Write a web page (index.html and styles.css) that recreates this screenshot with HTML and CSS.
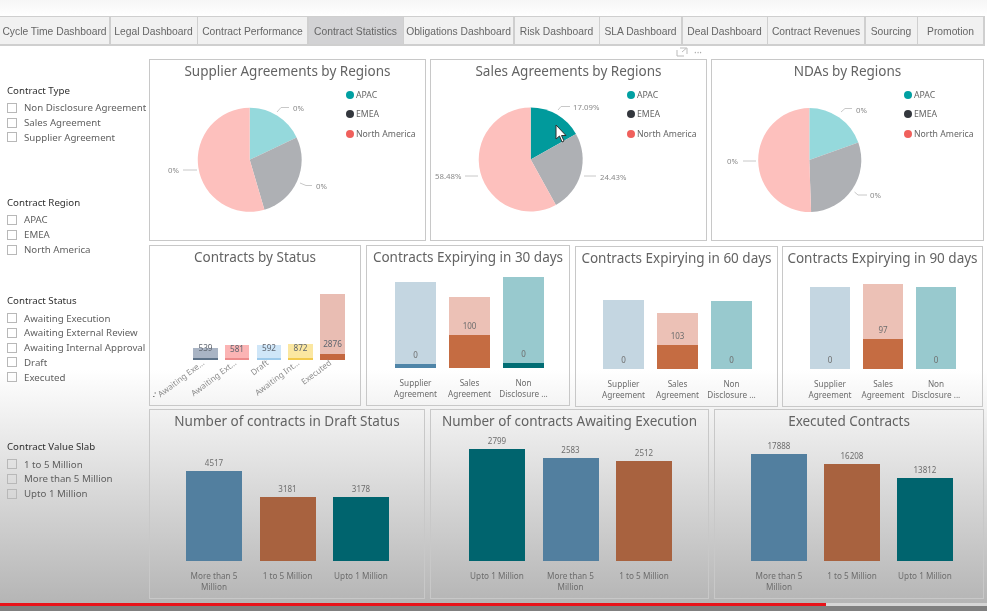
FILE: index.html
```html
<!DOCTYPE html>
<html lang="en">
<head>
  <meta charset="UTF-8">
  <title>Contract Statistics</title>
  <link rel="stylesheet" href="styles.css">
</head>
<body>
  <div class="tabs">
    <div class="tab">Cycle Time Dashboard</div>
    <div class="tab">Legal Dashboard</div>
    <div class="tab">Contract Performance</div>
    <div class="tab active">Contract Statistics</div>
    <div class="tab">Obligations Dashboard</div>
    <div class="tab">Risk Dashboard</div>
    <div class="tab">SLA Dashboard</div>
    <div class="tab">Deal Dashboard</div>
    <div class="tab">Contract Revenues</div>
    <div class="tab">Sourcing</div>
    <div class="tab">Promotion</div>
  </div>

  <div class="main">
    <div class="sidebar">
      <div class="slicer type">
        <h4>Contract Type</h4>
        <div class="opt">Non Disclosure Agreement</div>
        <div class="opt">Sales Agreement</div>
        <div class="opt">Supplier Agreement</div>
      </div>
      <div class="slicer region">
        <h4>Contract Region</h4>
        <div class="opt">APAC</div>
        <div class="opt">EMEA</div>
        <div class="opt">North America</div>
      </div>
      <div class="slicer status">
        <h4>Contract Status</h4>
        <div class="opt">Awaiting Execution</div>
        <div class="opt">Awaiting External Review</div>
        <div class="opt">Awaiting Internal Approval</div>
        <div class="opt">Draft</div>
        <div class="opt">Executed</div>
      </div>
      <div class="slicer slab">
        <h4>Contract Value Slab</h4>
        <div class="opt">1 to 5 Million</div>
        <div class="opt">More than 5 Million</div>
        <div class="opt">Upto 1 Million</div>
      </div>
    </div>

    <div class="charts">
      <div class="row row-pies">
        <div class="card">
          <div class="title">Supplier Agreements by Regions</div>
          <div class="pie-body">
            <svg class="pie" width="196" height="155">
              <path fill="#95d9dc" d="M99.7 76.8L99.7 24.8A52 52 0 0 1 146.6 54.4Z"/>
              <path fill="#aeb0b4" d="M99.7 76.8L146.6 54.4A52 52 0 0 1 114.4 126.7Z"/>
              <path fill="#fdc0bd" d="M99.7 76.8L114.4 126.7A52 52 0 1 1 99.7 24.8Z"/>
              <path class="leader" d="M127 29L131 24.5H139M150 100L156 102.5H162M33 87H47"/>
              <text x="143" y="28">0%</text>
              <text x="166" y="106">0%</text>
              <text x="18" y="90">0%</text>
            </svg>
            <div class="legend">
              <div class="key apac">APAC</div>
              <div class="key emea">EMEA</div>
              <div class="key na">North America</div>
            </div>
          </div>
        </div>
        <div class="card">
          <div class="tools">
            <svg width="12" height="10" viewBox="0 0 12 10"><path d="M1 3V9H8M4 1H11V7M6 5L10 1.5"/></svg>
            <span>&middot;&middot;&middot;</span>
          </div>
          <div class="title">Sales Agreements by Regions</div>
          <div class="pie-body">
            <svg class="pie" width="196" height="155">
              <path fill="#019a9c" d="M99.7 76.5L99.7 24.5A52 52 0 0 1 145 51Z"/>
              <path fill="#aeb0b4" d="M99.7 76.5L145 51A52 52 0 0 1 124.9 122Z"/>
              <path fill="#fdc0bd" d="M99.7 76.5L124.9 122A52 52 0 1 1 99.7 24.5Z"/>
              <path class="leader" d="M127 27L130 23.5H139M153 93H165M34 93H47"/>
              <text x="142" y="27">17.09%</text>
              <text x="169" y="97">24.43%</text>
              <text x="4" y="96">58.48%</text>
              <path class="cursor" d="M125 42V56L128.5 53L131 59L133 58L130.5 52.5H135Z"/>
            </svg>
            <div class="legend">
              <div class="key apac">APAC</div>
              <div class="key emea">EMEA</div>
              <div class="key na">North America</div>
            </div>
          </div>
        </div>
        <div class="card">
          <div class="title">NDAs by Regions</div>
          <div class="pie-body">
            <svg class="pie" width="192" height="155">
              <path fill="#95d9dc" d="M97.3 77L97.3 25A52 52 0 0 1 146.3 59.6Z"/>
              <path fill="#aeb0b4" d="M97.3 77L146.3 59.6A52 52 0 0 1 99.1 129Z"/>
              <path fill="#fdc0bd" d="M97.3 77L99.1 129A52 52 0 0 1 97.3 25Z"/>
              <path class="leader" d="M129 29L133 25.5H140M142.5 109L146 112H155M31 78H44"/>
              <text x="144" y="29.5">0%</text>
              <text x="158" y="115">0%</text>
              <text x="15" y="81">0%</text>
            </svg>
            <div class="legend">
              <div class="key apac">APAC</div>
              <div class="key emea">EMEA</div>
              <div class="key na">North America</div>
            </div>
          </div>
        </div>
      </div>

      <div class="row row-expiry">
        <div class="card">
          <div class="title">Contracts by Status</div>
          <svg class="status-chart" width="210" height="136">
            <rect x="43" y="79" width="25" height="12" fill="#a9b4c4"/><rect x="43" y="89" width="25" height="2" fill="#5d7288"/>
            <rect x="75" y="76" width="24" height="15" fill="#fbb4b4"/><rect x="75" y="89" width="24" height="2" fill="#ec8b8b"/>
            <rect x="107" y="76" width="24" height="15" fill="#cfe6f8"/><rect x="107" y="89" width="24" height="2" fill="#9cc9ea"/>
            <rect x="138" y="75" width="25" height="16" fill="#fbe7a1"/><rect x="138" y="89" width="25" height="2" fill="#f2c94c"/>
            <rect x="170" y="25" width="25" height="66" fill="#e9bdb3"/><rect x="170" y="85" width="25" height="6" fill="#c4673f"/>
            <text class="val" x="55.5" y="82">539</text>
            <text class="val" x="87" y="83">581</text>
            <text class="val" x="119" y="82">592</text>
            <text class="val" x="150.5" y="82">872</text>
            <text class="val" x="182.5" y="78">2876</text>
            <text class="slant" transform="translate(55 95) rotate(-37)">Awaiting Exe...</text>
            <text class="slant" transform="translate(87 95) rotate(-37)">Awaiting Ext...</text>
            <text class="slant" transform="translate(119 95) rotate(-37)">Draft</text>
            <text class="slant" transform="translate(150 95) rotate(-37)">Awaiting Int...</text>
            <text class="slant" transform="translate(182 95) rotate(-37)">Executed</text>
            <path class="dots" d="M3 127.5h1.5M4.5 124h1.5"/>
          </svg>
        </div>
        <div class="card">
          <div class="title">Contracts Expirying in 30 days</div>
          <div class="plot plot-30">
            <div class="col">
              <div class="bar pale-blue" style="height:86px"><span class="val">0</span><div class="fill blue" style="height:4px"></div></div>
              <div class="label">Supplier<br>Agreement</div>
            </div>
            <div class="col">
              <div class="bar pale-orange" style="height:71px"><span class="val">100</span><div class="fill orange" style="height:33px"></div></div>
              <div class="label">Sales<br>Agreement</div>
            </div>
            <div class="col">
              <div class="bar pale-teal" style="height:91px"><span class="val">0</span><div class="fill teal" style="height:5px"></div></div>
              <div class="label">Non<br>Disclosure ...</div>
            </div>
          </div>
        </div>
        <div class="card low">
          <div class="title">Contracts Expirying in 60 days</div>
          <div class="plot plot-60">
            <div class="col">
              <div class="bar pale-blue" style="height:69px"><span class="val">0</span></div>
              <div class="label">Supplier<br>Agreement</div>
            </div>
            <div class="col">
              <div class="bar pale-orange" style="height:56px"><span class="val">103</span><div class="fill orange" style="height:24px"></div></div>
              <div class="label">Sales<br>Agreement</div>
            </div>
            <div class="col">
              <div class="bar pale-teal" style="height:68px"><span class="val">0</span></div>
              <div class="label">Non<br>Disclosure ...</div>
            </div>
          </div>
        </div>
        <div class="card low">
          <div class="title">Contracts Expirying in 90 days</div>
          <div class="plot plot-90">
            <div class="col">
              <div class="bar pale-blue" style="height:82px"><span class="val">0</span></div>
              <div class="label">Supplier<br>Agreement</div>
            </div>
            <div class="col">
              <div class="bar pale-orange" style="height:85px"><span class="val">97</span><div class="fill orange" style="height:30px"></div></div>
              <div class="label">Sales<br>Agreement</div>
            </div>
            <div class="col">
              <div class="bar pale-teal" style="height:82px"><span class="val">0</span></div>
              <div class="label">Non<br>Disclosure ...</div>
            </div>
          </div>
        </div>
      </div>

      <div class="row row-totals">
        <div class="card">
          <div class="title">Number of contracts in Draft Status</div>
          <div class="plot plot-draft">
            <div class="col"><span class="val">4517</span><div class="bar solid-blue" style="height:90px"></div><div class="label">More than 5<br>Million</div></div>
            <div class="col"><span class="val">3181</span><div class="bar solid-orange" style="height:64px"></div><div class="label">1 to 5 Million</div></div>
            <div class="col"><span class="val">3178</span><div class="bar solid-teal" style="height:64px"></div><div class="label">Upto 1 Million</div></div>
          </div>
        </div>
        <div class="card">
          <div class="title">Number of contracts Awaiting Execution</div>
          <div class="plot plot-await">
            <div class="col"><span class="val">2799</span><div class="bar solid-teal" style="height:112px"></div><div class="label">Upto 1 Million</div></div>
            <div class="col"><span class="val">2583</span><div class="bar solid-blue" style="height:103px"></div><div class="label">More than 5<br>Million</div></div>
            <div class="col"><span class="val">2512</span><div class="bar solid-orange" style="height:100px"></div><div class="label">1 to 5 Million</div></div>
          </div>
        </div>
        <div class="card">
          <div class="title">Executed Contracts</div>
          <div class="plot plot-exec">
            <div class="col"><span class="val">17888</span><div class="bar solid-blue" style="height:107px"></div><div class="label">More than 5<br>Million</div></div>
            <div class="col"><span class="val">16208</span><div class="bar solid-orange" style="height:97px"></div><div class="label">1 to 5 Million</div></div>
            <div class="col"><span class="val">13812</span><div class="bar solid-teal" style="height:83px"></div><div class="label">Upto 1 Million</div></div>
          </div>
        </div>
      </div>
    </div>
  </div>

  <div class="progress"><div class="played" style="width:826px"></div></div>
  <div class="player-edge"></div>
</body>
</html>
```

FILE: styles.css
```css
* {
  margin: 0;
  padding: 0;
  box-sizing: border-box;
}

body {
  width: 987px;
  height: 611px;
  overflow: hidden;
  display: flex;
  flex-direction: column;
  font-family: "Noto Sans", "Open Sans", sans-serif;
  color: #666;
  background: linear-gradient(#f6f6f6 0, #fff 16px, #fff 370px, #b4b4b4 606px);
}

/* the source is a video frame, so everything is a little soft */
.tabs,
.main {
  filter: blur(0.4px);
}

/* tab strip */
.tabs {
  display: grid;
  grid-template-columns: 109px 86px 109px 94px 109px 84px 81px 84px 96px 51px 65px;
  column-gap: 1.5px;
  width: 985px;
  height: 30px;
  margin-top: 16px;
  background: #cfcfcf;
  padding: 1px 0 2px;
}

.tab {
  display: flex;
  align-items: center;
  justify-content: center;
  padding-top: 2px;
  background: #f1f1f1;
  font-family: "Liberation Sans", sans-serif;
  font-size: 10.3px;
  color: #666;
  white-space: nowrap;
}

.tab.active {
  background: #d2d2d4;
}

.main {
  flex: 1;
  display: flex;
  padding-top: 13px;
}

/* left hand slicers */
.sidebar {
  width: 149px;
  flex: none;
  padding-left: 7px;
}

.slicer h4 {
  font-size: 9.7px;
  font-weight: 400;
  color: #2f2f2f;
  line-height: 14px;
  margin-bottom: 2.5px;
}

.slicer.type { margin-top: 25px; }
.slicer.region { margin-top: 51.2px; }
.slicer.status { margin-top: 37.2px; }
.slicer.slab { margin-top: 55.5px; }

.opt {
  display: flex;
  align-items: center;
  gap: 7px;
  height: 14.8px;
  font-size: 9.7px;
  color: #5f5f5f;
  white-space: nowrap;
}

.opt::before {
  content: "";
  width: 10px;
  height: 10px;
  flex: none;
  box-sizing: border-box;
  border: 1.5px solid #b8b8b8;
}

/* chart grid */
.charts {
  width: 836px;
  display: flex;
  flex-direction: column;
  gap: 4px;
}

.row {
  display: grid;
  column-gap: 4px;
}

.row-pies {
  height: 182px;
  grid-template-columns: 277px 277px 273px;
}

.row-expiry {
  height: 160px;
  grid-template-columns: 213px 204px 204px 201px;
}

.row-expiry .card:nth-child(1) { margin-right: 1px; }
.row-expiry .card:nth-child(3) { margin-left: 1px; }

.row-totals {
  height: 190px;
  grid-template-columns: 276px 279px 270px;
  column-gap: 5px;
}

.card {
  position: relative;
  display: flex;
  flex-direction: column;
  border: 1px solid #c8c8c8;
  min-width: 0;
}

.card.low {
  margin-top: 1px;
  margin-bottom: -1px;
}

.title {
  height: 23px;
  line-height: 22px;
  flex: none;
  text-align: center;
  font-size: 13.5px;
  color: #636363;
  white-space: nowrap;
}

.tools {
  position: absolute;
  top: -13px;
  right: 4px;
  display: flex;
  align-items: center;
  gap: 6px;
  font-size: 10px;
  line-height: 10px;
  color: #aaa;
}

.tools path {
  fill: none;
  stroke: #bbb;
}

/* pies */
.pie-body {
  display: flex;
}

.pie {
  flex: none;
}

.pie text {
  font-size: 7.8px;
  fill: #8a8a8a;
}

.leader {
  fill: none;
  stroke: #c8c8c8;
}

.cursor {
  fill: #fff;
  stroke: #333;
  stroke-width: 1;
}

.legend {
  display: flex;
  flex-direction: column;
  padding-top: 2px;
}

.key {
  display: flex;
  align-items: center;
  gap: 2px;
  height: 19.5px;
  font-size: 8.7px;
  color: #666;
  white-space: nowrap;
}

.key::before {
  content: "";
  width: 8px;
  height: 8px;
  border-radius: 50%;
}

.key.apac::before { background: #01a0a2; }
.key.emea::before { background: #33373d; }
.key.na::before { background: #f0605c; }

/* bars */
.status-chart text {
  font-size: 8.2px;
  fill: #7f7f7f;
}

.status-chart .val {
  text-anchor: middle;
  fill: #5f6670;
}

.status-chart .slant {
  text-anchor: end;
  fill: #8c8c8c;
}

.dots {
  stroke: #777;
  stroke-width: 1.2;
}

.plot {
  flex: 1;
  display: flex;
}

.plot-30 { padding-left: 28px; gap: 13px; }
.plot-60 { padding-left: 27px; gap: 13px; }
.plot-90 { padding-left: 27px; gap: 13px; }
.plot-draft { padding-left: 36px; gap: 17.5px; }
.plot-await { padding-left: 38px; gap: 17.5px; }
.plot-exec { padding-left: 36px; gap: 17px; }

.col {
  display: flex;
  flex-direction: column;
  align-items: center;
  justify-content: flex-end;
  width: 41px;
}

.plot-90 .col {
  width: 40px;
}

.plot-draft .col,
.plot-await .col,
.plot-exec .col {
  width: 56px;
}

.bar {
  width: 100%;
  flex: none;
  display: flex;
  flex-direction: column;
  align-items: center;
  justify-content: flex-end;
}

.fill {
  width: 100%;
  flex: none;
}

.val {
  font-size: 8px;
  line-height: 11px;
  color: #6e6e6e;
}

.bar .val {
  margin-bottom: 4px;
}

.col > .val {
  margin-bottom: 3px;
}

.label {
  height: 37px;
  padding-top: 9px;
  font-size: 8.2px;
  line-height: 11px;
  text-align: center;
  color: #6c6c6c;
  white-space: nowrap;
}

.pale-blue { background: #c4d6e1; }
.pale-orange { background: #ecc1b6; }
.pale-teal { background: #98c9ce; }
.blue { background: #4f85a8; }
.orange { background: #c56c42; }
.teal { background: #016d74; }
.solid-blue { background: #527f9f; }
.solid-orange { background: #a8623f; }
.solid-teal { background: #00646e; }

/* video progress bar along the bottom */
.progress {
  height: 3px;
  flex: none;
  background: #d6d6d6;
}

.played {
  height: 100%;
  background: #e8131a;
}

.player-edge {
  height: 5px;
  flex: none;
  background: #808080;
}
```
